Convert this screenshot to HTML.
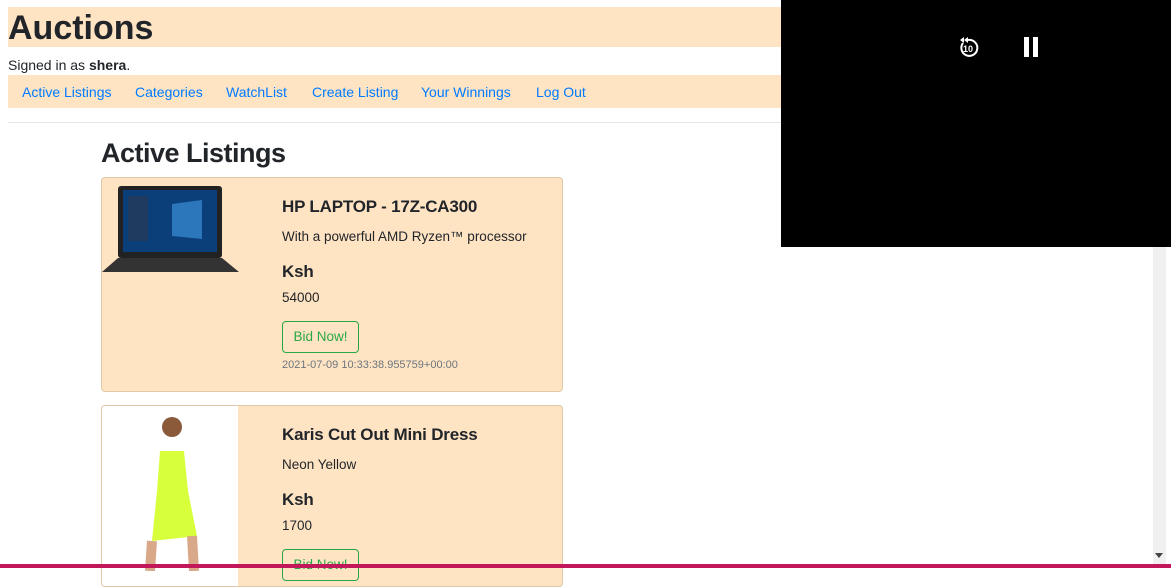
<!DOCTYPE html>
<html><head><style>
body{margin:0;width:1171px;height:568px;overflow:hidden;background:#fff;font-family:"Liberation Sans",sans-serif;color:#212529;position:relative}
.hdr{position:absolute;left:8px;top:7px;width:1160px;height:40px;background:#ffe4c4}
.hdr h1{margin:0;font-size:34px;font-weight:bold;line-height:44px;position:absolute;top:-1px;left:0}
.sig{position:absolute;left:8px;top:57px;font-size:14px}
.nav{position:absolute;left:8px;top:75px;width:1160px;height:33px;background:#ffe4c4;font-size:14px}
.nav a{position:absolute;top:9px;color:#007bff;text-decoration:none}
.hr{position:absolute;left:8px;top:122px;width:1150px;height:1px;background:#e5e5e5}
h2{position:absolute;left:101px;top:138px;margin:0;font-size:27px;font-weight:bold;letter-spacing:-0.5px}
.card{position:absolute;left:101px;width:460px;height:213px;background:#ffe4c4;border:1px solid #e0c8a8;border-radius:4px;overflow:hidden}
.card .t{position:absolute;left:180px;font-size:17px;font-weight:bold;letter-spacing:-0.2px}
.card .p{position:absolute;left:180px;font-size:13.5px}
.btn{position:absolute;left:180px;width:75px;height:30px;border:1px solid #28a745;border-radius:4px;color:#28a745;font-size:13.5px;text-align:center;line-height:30px}
.vid{position:absolute;left:781px;top:0;width:390px;height:247px;background:#000}
</style></head><body>
<div class="hdr"><h1>Auctions</h1></div>
<div class="sig">Signed in as <b>shera</b>.</div>
<div class="nav">
<a style="left:14px">Active Listings</a><a style="left:127px">Categories</a><a style="left:218px">WatchList</a><a style="left:304px">Create Listing</a><a style="left:413px">Your Winnings</a><a style="left:528px">Log Out</a></div>
<div class="hr"></div>
<h2>Active Listings</h2>
<div class="card" style="top:177px">
<svg style="position:absolute;left:0;top:6px" width="138" height="92"><rect x="16" y="2" width="104" height="72" rx="3" fill="#222"/><rect x="21" y="6" width="94" height="62" fill="#0a3f7a"/><path d="M70 20 L100 16 L100 55 L70 52Z" fill="#3a8ed8" opacity=".7"/><rect x="26" y="12" width="20" height="45" fill="#2a3a55" opacity=".7"/><path d="M16 74 L120 74 L137 88 L0 88Z" fill="#333"/></svg>
<div class="t" style="top:19px">HP LAPTOP - 17Z-CA300</div>
<div class="p" style="top:51px">With a powerful AMD Ryzen™ processor</div>
<div class="t" style="top:84px">Ksh</div>
<div class="p" style="top:112px">54000</div>
<div class="btn" style="top:143px">Bid Now!</div>
<div class="p" style="top:181px;font-size:11px;color:#6c757d">2021-07-09 10:33:38.955759+00:00</div>
</div>
<div class="card" style="top:405px;height:180px">
<div style="position:absolute;left:0;top:0;width:136px;height:180px;background:#fff"></div>
<svg style="position:absolute;left:20px;top:5px" width="100" height="160"><circle cx="50" cy="16" r="10" fill="#8a5a3a"/><path d="M38 40 L62 40 L66 80 L75 125 L30 130 L35 80Z" fill="#d8ff3c"/><path d="M30 130 L28 160 M70 125 L72 160" stroke="#d9a888" stroke-width="10"/></svg>
<div class="t" style="top:19px">Karis Cut Out Mini Dress</div>
<div class="p" style="top:51px">Neon Yellow</div>
<div class="t" style="top:84px">Ksh</div>
<div class="p" style="top:112px">1700</div>
<div class="btn" style="top:143px">Bid Now!</div>
</div>
<div style="position:absolute;left:1153px;top:247px;width:13px;height:317px;background:#f0f0f0"></div>
<div style="position:absolute;left:1155px;top:553px;width:0;height:0;border-left:4px solid transparent;border-right:4px solid transparent;border-top:5px solid #444"></div>
<div style="position:absolute;left:0;top:564px;width:1171px;height:4px;background:#c2185b"></div>
<div class="vid">
<svg style="position:absolute;left:175px;top:36px" width="24" height="24" viewBox="0 0 24 24"><path d="M7 7 A8 8 0 1 0 12 4" fill="none" stroke="#fff" stroke-width="2"/><path d="M12 1 L8 4 L12 7Z M8 1 L4 4 L8 7Z" fill="#fff"/><text x="12" y="16" font-size="9" font-weight="bold" fill="#fff" text-anchor="middle" font-family="Liberation Sans">10</text></svg>
<div style="position:absolute;left:243px;top:37px;width:5px;height:20px;background:#fff"></div>
<div style="position:absolute;left:252px;top:37px;width:5px;height:20px;background:#fff"></div>
</div>
</body></html>
